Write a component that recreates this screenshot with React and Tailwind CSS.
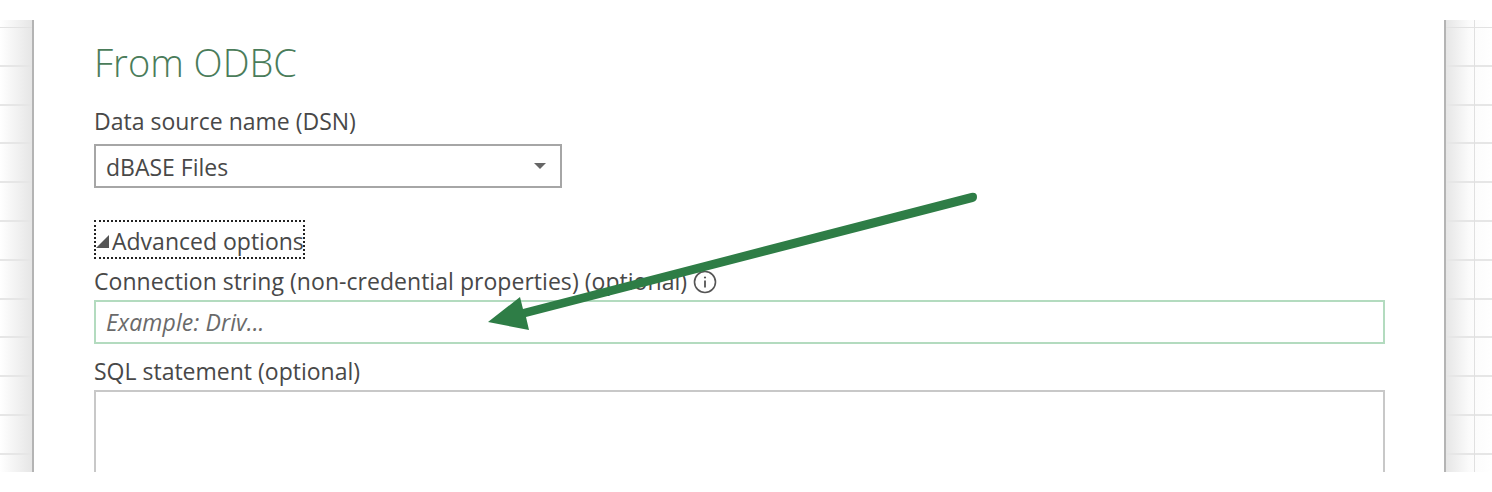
const font = "font-['Open_Sans','Noto_Sans',sans-serif]";

function SideStrip({ side }) {
  const rows = [0, 1, 2, 3, 4, 5, 6, 7, 8, 9, 10, 11];
  return (
    <div className={side === 'left'
      ? 'relative w-[34px] shrink-0 overflow-hidden border-r-2 border-[#b4b4b4] bg-gradient-to-r from-white to-[#e6e6e6]'
      : 'relative flex-1 overflow-hidden border-l-2 border-[#b4b4b4] bg-gradient-to-r from-[#e6e6e6] via-[#fbfbfb] via-50% to-white'}>
      {rows.map((r) => (
        <div key={r} className={r === 0 ? 'h-[8px] border-b border-[#e2e2e2]' : 'h-[38.8px] border-b-2 border-[#e6e6e6]'}></div>
      ))}
      {side === 'right' && <div className="absolute top-0 bottom-0 left-[28px] w-[1px] bg-[#e0e0e0]"></div>}
    </div>
  );
}

function Arrow() {
  return (
    <svg className="absolute left-0 top-0 pointer-events-none" width="1492" height="492" viewBox="0 0 1492 492">
      <path d="M971 193 Q977 192 977 197 Q977 201 973 202 L526 317 L529 330 L488 322 L520 297 L523 309 Z" fill="#2e7d46" />
    </svg>
  );
}

export default function App() {
  return (
    <div className={`relative h-[492px] w-[1492px] overflow-hidden bg-white ${font}`}>
      <div className="flex h-[452px] mt-[20px]">
        <SideStrip side="left" />
        <div className="w-[1410px] shrink-0 overflow-hidden pl-[60px] pr-[59px] text-[23px] text-[#484848]">
          <h1 className="mt-[14px] h-[56px] text-[38px] leading-[56px] font-light text-[#4a7c5a]">From ODBC</h1>
          <div className="mt-[15px] h-[32px] leading-[32px]">Data source name (DSN)</div>
          <div className="mt-[7px] flex h-[44px] w-[468px] items-center justify-between border-2 border-[#a6a6a6] pl-[10px] pr-[14px]">
            <span className="pt-[3px]">dBASE Files</span>
            <span className="h-0 w-0 border-x-[6px] border-t-[6px] border-x-transparent border-t-[#666666]"></span>
          </div>
          <div className="mt-[32px] flex h-[39px] w-[211px] items-center border-2 border-dotted border-[#222222]">
            <svg width="13" height="13" viewBox="0 0 13 13" className="shrink-0 mt-[3px]">
              <path d="M13 0V13H0Z" fill="#555555" />
            </svg>
            <span className="ml-[3px] whitespace-nowrap pt-[3px]">Advanced options</span>
          </div>
          <div className="mt-[6px] flex h-[32px] items-center leading-[32px]">
            <span className="tracking-[0.04px]">Connection string (non-credential properties) (optional)</span>
            <svg width="24" height="24" viewBox="0 0 24 24" className="ml-[6px] shrink-0 mt-[2px]">
              <circle cx="12" cy="12" r="10.5" fill="none" stroke="#555555" strokeWidth="1.6" />
              <circle cx="12" cy="7.5" r="1.1" fill="#555555" />
              <path d="M12 10.5V17.5" stroke="#555555" strokeWidth="1.8" />
            </svg>
          </div>
          <div className="mt-[3px] flex h-[44px] items-center border-2 border-[#b3dbbf] pl-[10px] italic tracking-[0.13px] text-[#6a6a6a]">Example: Driv...</div>
          <div className="mt-[11px] h-[32px] leading-[32px]">SQL statement (optional)</div>
          <div className="mt-[3px] h-[120px] border-2 border-[#c8c8c8]"></div>
        </div>
        <SideStrip side="right" />
      </div>
      <Arrow />
    </div>
  );
}
